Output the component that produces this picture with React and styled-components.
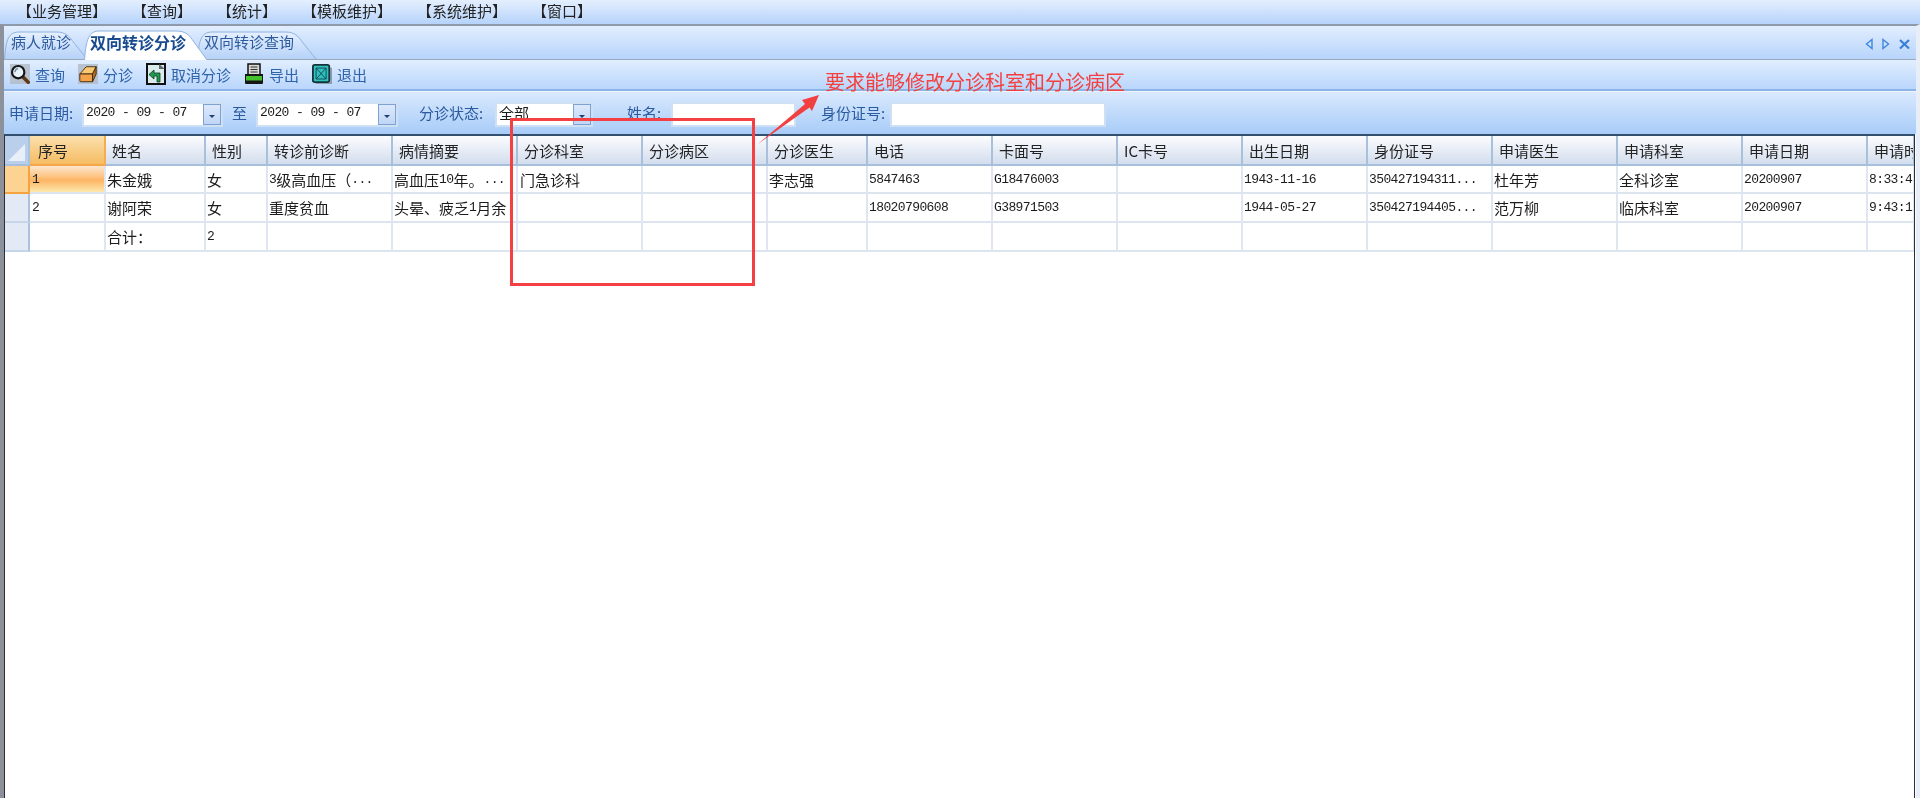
import React from "react";
import styled, { createGlobalStyle } from "styled-components";

const GlobalStyle = createGlobalStyle`
  html, body {
    margin: 0;
    padding: 0;
    background: #fff;
  }
  body {
    font-family: "Noto Sans CJK SC", "Liberation Sans", sans-serif;
    font-size: 15px;
    color: #1c1c1c;
    overflow: hidden;
  }
`;

const Page = styled.div`
  position: relative;
  width: 1920px;
  height: 798px;
  overflow: hidden;
  display: flex;
  flex-direction: column;
  filter: blur(0.4px);
`;

const MenuBar = styled.div`
  height: 24px;
  flex: none;
  display: flex;
  align-items: center;
  gap: 25px;
  padding: 0 0 4px 17px;
  box-sizing: border-box;
  background: linear-gradient(#e4effe, #b6d3fb);
  color: #222;
  line-height: 1;
`;

const Window = styled.div`
  flex: 1;
  min-height: 0;
  display: flex;
  flex-direction: column;
  border-top: 2px solid #8e9aac;
  border-left: 4px solid #8d919c;
  border-right: 4px solid #e8eef7;
  background: #fff;
`;

const TabStrip = styled.div`
  height: 34px;
  flex: none;
  display: flex;
  align-items: flex-end;
  padding-top: 3px;
  box-sizing: border-box;
  background: linear-gradient(#e2eefe, #b7d4fb);
  border-bottom: 1px solid #9aa8bb;
`;

const Tab = styled.div`
  position: relative;
  width: ${p => p.$width}px;
  height: ${p => (p.$active ? 30 : 28)}px;
  margin-left: ${p => p.$overlap}px;
  margin-bottom: ${p => (p.$active ? -1 : 0)}px;
  padding: ${p => (p.$active ? 1 : 0)}px 0 0 ${p => p.$pad}px;
  box-sizing: border-box;
  z-index: ${p => (p.$active ? 2 : 1)};
  color: ${p => (p.$active ? "#174a8f" : "#2c5a9c")};
  font-size: ${p => (p.$active ? 16 : 15)}px;
  font-weight: ${p => (p.$active ? 700 : 400)};
  line-height: 22px;
  white-space: nowrap;

  svg {
    position: absolute;
    left: 0;
    top: 0;
    z-index: -1;
  }
`;

const TabTail = styled.div`
  margin-left: auto;
  align-self: center;
  display: flex;
  margin-right: 5px;
`;

const Toolbar = styled.div`
  height: 31px;
  flex: none;
  display: flex;
  align-items: center;
  gap: 13px;
  padding: 0 0 1px 6px;
  box-sizing: border-box;
  background: linear-gradient(#e1eeff, #b9d6fc);
  border-bottom: 2px solid #8db4e6;
`;

const ToolButton = styled.div`
  display: flex;
  align-items: center;
  gap: 5px;
  color: #2f63ab;
  line-height: 1;

  svg {
    flex: none;
  }
`;

const FilterBar = styled.div`
  height: 43px;
  flex: none;
  display: flex;
  align-items: center;
  padding: 2px 0 0 5px;
  box-sizing: border-box;
  background: linear-gradient(#d9e9fe, #a8ccf8);
  border-top: 1px solid #edf4fe;
  color: #2a5a9f;
  line-height: 1;
`;

const FilterLabel = styled.span`
  width: ${p => p.$width}px;
  flex: none;
  margin-left: ${p => p.$left || 0}px;
  margin-bottom: 3px;
  text-align: ${p => (p.$center ? "center" : "left")};
  white-space: nowrap;
`;

const FieldBox = styled.div`
  width: ${p => p.$width}px;
  height: 25px;
  flex: none;
  display: flex;
  align-items: center;
  justify-content: space-between;
  padding-left: 2px;
  box-sizing: border-box;
  background: #fff;
  border: 2px solid #cfe0f5;
  color: #1c1c1c;
`;

const FieldText = styled.span`
  margin-bottom: 3px;
`;

const DateText = styled.span`
  margin-bottom: 3px;
  font-family: "Liberation Mono", monospace;
  font-size: 13px;
  letter-spacing: -0.6px;
  white-space: pre;
`;

const DropButton = styled.div`
  width: 18px;
  height: 21px;
  flex: none;
  display: flex;
  align-items: center;
  justify-content: center;
  box-sizing: border-box;
  background: linear-gradient(#dde9fb, #c0d6f5);
  border: 1px solid #7ea2d4;

  &::after {
    content: "";
    margin-top: 4px;
    border-left: 3px solid transparent;
    border-right: 3px solid transparent;
    border-top: 3px solid #1f3f73;
  }
`;

const Grid = styled.div`
  flex: 1;
  min-height: 0;
  overflow: hidden;
  margin-right: 1px;
  background: #fff;
  border-top: 2px solid #33506f;
  border-left: 1px solid #2a2f38;
  border-right: 1px solid #2a2f38;
`;

const Row = styled.div`
  display: grid;
  grid-template-columns: ${p => p.$columns};
  height: ${p => p.$height}px;
`;

const HeadCell = styled.div`
  display: flex;
  align-items: center;
  overflow: hidden;
  white-space: nowrap;
  padding-left: ${p => p.$pad || 6}px;
  box-sizing: border-box;
  background: ${p =>
    p.$hot
      ? "linear-gradient(#fae0ac, #f6bc63)"
      : "linear-gradient(#fbfcfe, #d3dded)"};
  border-right: 2px solid ${p => (p.$hot ? "#f5ad52" : "#a9c0da")};
  border-bottom: 2px solid ${p => (p.$hot ? "#f3a748" : "#a6bfdc")};
  color: #222;
`;

const Corner = styled.div`
  position: relative;
  background: #b9cfec;
  border-right: 2px solid #a9c3df;
  border-bottom: 2px solid #a6bfdc;

  &::after {
    content: "";
    position: absolute;
    right: 3px;
    bottom: 3px;
    border-left: 17px solid transparent;
    border-bottom: 17px solid #e9eff8;
  }
`;

const RowHead = styled.div`
  background: ${p => (p.$hot ? "#fcd391" : "#e3eaf6")};
  border-right: 2px solid ${p => (p.$hot ? "#f5a340" : "#a9c3df")};
  border-bottom: 2px solid ${p => (p.$hot ? "#f5a340" : "#c5d5ea")};
`;

const Cell = styled.div`
  display: flex;
  align-items: center;
  overflow: hidden;
  white-space: nowrap;
  padding-left: ${p => p.$pad || 1}px;
  box-sizing: border-box;
  background: ${p =>
    p.$hot
      ? "linear-gradient(#fde6cf 0%, #fdc98d 35%, #fdb565 55%, #fde9ae 100%)"
      : "#fff"};
  border-right: 2px solid #dfe6f2;
  border-bottom: 2px solid #dce4f0;
  color: #1c1c1c;
`;

const Num = styled.span`
  font-family: "Liberation Mono", monospace;
  font-size: 13px;
  letter-spacing: -0.6px;
  white-space: pre;
`;

const AnnotationBox = styled.div`
  position: absolute;
  left: 510px;
  top: 118px;
  width: 245px;
  height: 168px;
  box-sizing: border-box;
  border: 3px solid #f44043;
`;

const AnnotationText = styled.div`
  position: absolute;
  left: 825px;
  top: 68px;
  color: #f4403f;
  font-size: 20px;
  line-height: 28px;
  white-space: nowrap;
`;

const ArrowMark = styled.svg`
  position: absolute;
  left: 750px;
  top: 88px;
`;

const tabPath = (w, h) =>
  `M0.5 ${h} C2 ${h - 16} 3 1 15 1 L${w - 32} 1 C${w - 22} 1 ${w - 19} 5 ${w - 14} 12 L${w - 1} ${h}`;

const TabShape = ({ width, height, active }) => (
  <svg width={width} height={height} viewBox={`0 0 ${width} ${height}`}>
    <defs>
      <linearGradient id="tabIdle" x1="0" y1="0" x2="0" y2="1">
        <stop offset="0" stopColor="#e6f0ff" />
        <stop offset="1" stopColor="#b6d2f8" />
      </linearGradient>
    </defs>
    <path
      d={tabPath(width, height)}
      fill={active ? "#ffffff" : "url(#tabIdle)"}
      stroke="#8fb2dd"
    />
  </svg>
);

const SearchIcon = () => (
  <svg width="20" height="20" viewBox="0 0 22 22">
    <rect width="22" height="22" fill="#b4bcc8" opacity="0.85" />
    <path d="M13 13 L20 20" stroke="#5e3a16" strokeWidth="4" strokeLinecap="round" />
    <circle cx="9" cy="9" r="6.8" fill="#e8f2fa" stroke="#161616" strokeWidth="2.4" />
    <path d="M5.5 9 A4 4 0 0 1 9 5" fill="none" stroke="#7d93a8" strokeWidth="1.6" />
  </svg>
);

const EraserIcon = () => (
  <svg width="20" height="20" viewBox="0 0 22 22">
    <rect width="22" height="22" fill="#b4bcc8" opacity="0.85" />
    <path d="M2 11 L9 3 H20 L16 11 Z" fill="#fbc872" stroke="#3a2a10" />
    <path d="M2 11 H16 V19.5 H3 Q2 19.5 2 18 Z" fill="#f4a24a" stroke="#3a2a10" />
    <path d="M16 11 L20 3 V11 L16 19.5 Z" fill="#b9701f" stroke="#3a2a10" />
  </svg>
);

const CancelIcon = () => (
  <svg width="20" height="22" viewBox="0 0 20 22">
    <rect x="1" y="1" width="18" height="20" fill="#dcecee" stroke="#111" strokeWidth="2" />
    <path d="M13 1 L19 6 H13 Z" fill="#5d6b6f" />
    <path d="M14 19 V10 H8 V7 L3 11.5 L8 16 V13 H11 V19 Z" fill="#1f9a52" stroke="#0d3a20" strokeWidth="0.8" />
  </svg>
);

const PrintIcon = () => (
  <svg width="20" height="22" viewBox="0 0 20 22">
    <rect x="4" y="1" width="12" height="11" fill="#d9d9d4" stroke="#111" strokeWidth="1.5" />
    <path d="M6.5 4 H13.5 M6.5 6.5 H13.5 M6.5 9 H13.5" stroke="#333" />
    <path d="M1 11 H19 V20 Q19 21 18 21 H2 Q1 21 1 20 Z" fill="#161616" />
    <rect x="2" y="13" width="16" height="4.5" fill="#43c22c" />
  </svg>
);

const ExitIcon = () => (
  <svg width="20" height="20" viewBox="0 0 22 22">
    <path d="M21 4 V21 H4" fill="none" stroke="#7c8c9c" strokeWidth="2" opacity="0.8" />
    <rect x="1" y="1" width="18" height="19" rx="2" fill="#2fc2bd" stroke="#14333a" strokeWidth="2" />
    <path d="M4.5 4.5 H15.5 V16.5 H4.5 Z M4.5 4.5 L15.5 16.5 M15.5 4.5 L4.5 16.5" fill="none" stroke="#143f52" />
  </svg>
);

const TabNav = () => (
  <svg width="46" height="12" viewBox="0 0 46 12">
    <path d="M7 1.5 L1.5 6 L7 10.5 Z" fill="#cfe2fb" stroke="#3f86de" strokeWidth="1.4" />
    <path d="M18 1.5 L23.5 6 L18 10.5 Z" fill="#cfe2fb" stroke="#3f86de" strokeWidth="1.4" />
    <path d="M35 2 L44 10.5 M44 2 L35 10.5" stroke="#3a7fd6" strokeWidth="2.2" />
  </svg>
);

const AnnotationArrow = () => (
  <ArrowMark width="72" height="60" viewBox="0 0 72 60">
    <path d="M8 56 L55 16 L52 12 L69 7 L62 23 L59.5 19.5 Z" fill="#f23f40" />
  </ArrowMark>
);

const columnWidths = [25, 76, 100, 62, 125, 125, 125, 125, 100, 125, 125, 125, 125, 125, 125, 125, 125, 47];
const columns = columnWidths.map(w => `${w}px`).join(" ");

const headers = [
  "序号", "姓名", "性别", "转诊前诊断", "病情摘要", "分诊科室", "分诊病区", "分诊医生",
  "电话", "卡面号", "IC卡号", "出生日期", "身份证号", "申请医生", "申请科室", "申请日期", "申请时间"
];

const rows = [
  [
    <Num>1</Num>, "朱金娥", "女", <><Num>3</Num>级高血压（<Num>...</Num></>, <>高血压<Num>10</Num>年。<Num>...</Num></>,
    "门急诊科", "", "李志强", <Num>5847463</Num>, <Num>G18476003</Num>, "", <Num>1943-11-16</Num>,
    <Num>350427194311...</Num>, "杜年芳", "全科诊室", <Num>20200907</Num>, <Num>8:33:41</Num>
  ],
  [
    <Num>2</Num>, "谢阿荣", "女", "重度贫血", <>头晕、疲乏<Num>1</Num>月余</>,
    "", "", "", <Num>18020790608</Num>, <Num>G38971503</Num>, "", <Num>1944-05-27</Num>,
    <Num>350427194405...</Num>, "范万柳", "临床科室", <Num>20200907</Num>, <Num>9:43:12</Num>
  ],
  ["", "合计：", <Num>2</Num>, "", "", "", "", "", "", "", "", "", "", "", "", "", ""]
];

const rowHeights = [28, 29, 29];

const menus = ["【业务管理】", "【查询】", "【统计】", "【模板维护】", "【系统维护】", "【窗口】"];

export default function App() {
  return (
    <Page>
      <GlobalStyle />
      <MenuBar>
        {menus.map(m => (
          <span key={m}>{m}</span>
        ))}
      </MenuBar>
      <Window>
        <TabStrip>
          <Tab $width={84} $overlap={0} $pad={7}>
            <TabShape width={84} height={28} />
            病人就诊
          </Tab>
          <Tab $active $width={124} $overlap={-4} $pad={6}>
            <TabShape width={124} height={30} active />
            双向转诊分诊
          </Tab>
          <Tab $width={120} $overlap={-11} $pad={7}>
            <TabShape width={120} height={28} />
            双向转诊查询
          </Tab>
          <TabTail>
            <TabNav />
          </TabTail>
        </TabStrip>
        <Toolbar>
          <ToolButton><SearchIcon />查询</ToolButton>
          <ToolButton><EraserIcon />分诊</ToolButton>
          <ToolButton><CancelIcon />取消分诊</ToolButton>
          <ToolButton><PrintIcon />导出</ToolButton>
          <ToolButton><ExitIcon />退出</ToolButton>
        </Toolbar>
        <FilterBar>
          <FilterLabel $width={73}>申请日期:</FilterLabel>
          <FieldBox $width={141}>
            <DateText>2020 - 09 - 07</DateText>
            <DropButton />
          </FieldBox>
          <FilterLabel $width={33} $center>至</FilterLabel>
          <FieldBox $width={142}>
            <DateText>2020 - 09 - 07</DateText>
            <DropButton />
          </FieldBox>
          <FilterLabel $left={21} $width={76}>分诊状态:</FilterLabel>
          <FieldBox $width={98}>
            <FieldText>全部</FieldText>
            <DropButton />
          </FieldBox>
          <FilterLabel $left={34} $width={44}>姓名:</FilterLabel>
          <FieldBox $width={125} />
          <FilterLabel $left={25} $width={69}>身份证号:</FilterLabel>
          <FieldBox $width={216} />
        </FilterBar>
        <Grid>
          <Row $columns={columns} $height={30}>
            <Corner />
            {headers.map((h, i) => (
              <HeadCell key={h} $hot={i === 0} $pad={i === 0 ? 8 : 6}>
                {h}
              </HeadCell>
            ))}
          </Row>
          {rows.map((cells, r) => (
            <Row key={r} $columns={columns} $height={rowHeights[r]}>
              <RowHead $hot={r === 0} />
              {cells.map((c, i) => (
                <Cell key={i} $hot={r === 0 && i === 0} $pad={i === 0 || i === 5 ? 2 : 1}>
                  {c}
                </Cell>
              ))}
            </Row>
          ))}
        </Grid>
      </Window>
      <AnnotationBox />
      <AnnotationArrow />
      <AnnotationText>要求能够修改分诊科室和分诊病区</AnnotationText>
    </Page>
  );
}
